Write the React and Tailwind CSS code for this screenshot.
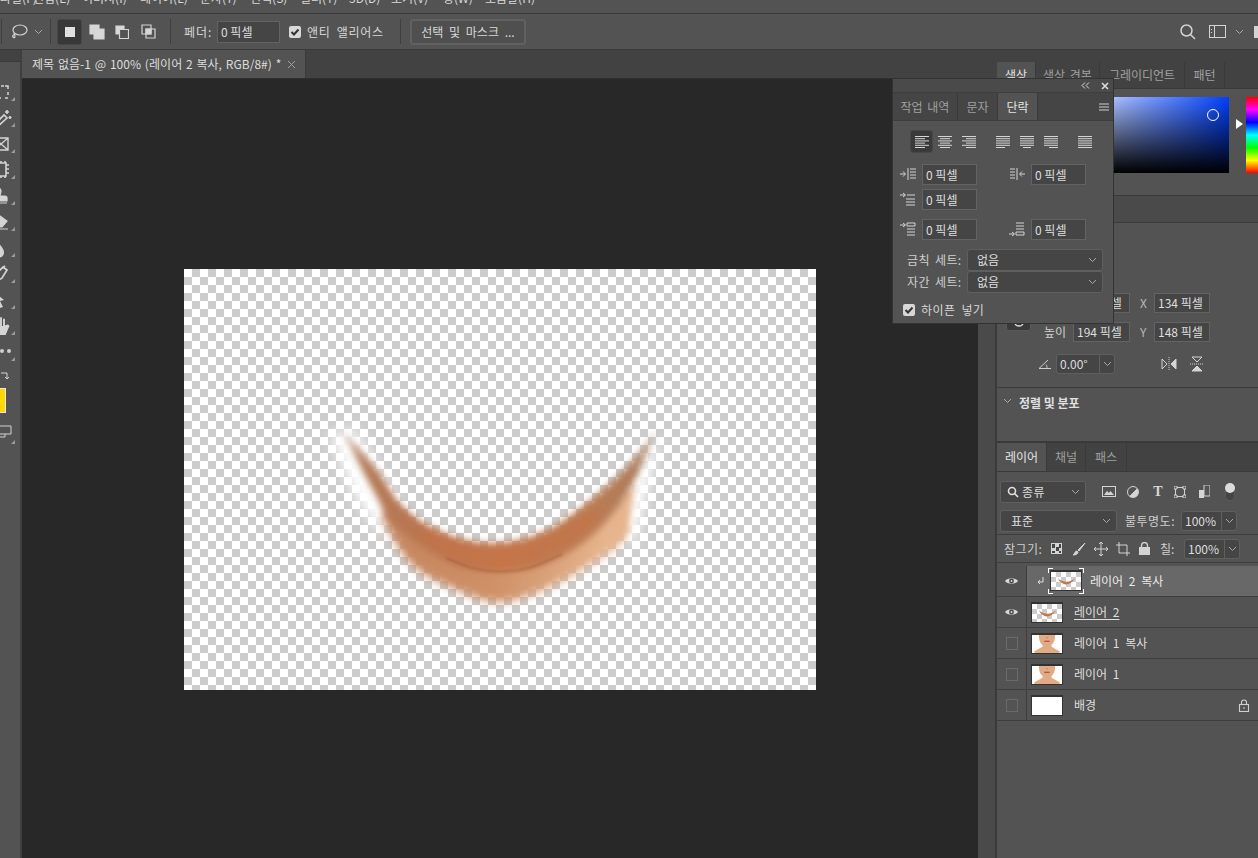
const font = "font-['Noto_Sans_CJK_KR','Liberation_Sans',sans-serif]";

const Ico = ({ w = 16, h = 16, children, className = "" }) => (
  <svg width={w} height={h} viewBox={`0 0 ${w} ${h}`} className={`block shrink-0 ${className}`} fill="none" stroke="#d4d4d4" strokeWidth="1.2">
    {children}
  </svg>
);

const Chevron = ({ className = "" }) => (
  <svg width="9" height="6" viewBox="0 0 9 6" className={`block shrink-0 ${className}`} fill="none" stroke="#a8a8a8" strokeWidth="1">
    <path d="M1 1l3.5 3.5L8 1" />
  </svg>
);

const Field = ({ children, w = "w-[55px]", h = "h-[21px]" }) => (
  <div className={`${w} ${h} shrink-0 bg-[#454545] border border-[#636363] text-[#dedede] text-[12px] pl-[3px] flex items-center leading-none whitespace-nowrap overflow-hidden`}>{children}</div>
);

const Select = ({ w, h = "h-[22px]", children, className = "" }) => (
  <div className={`${w} ${h} shrink-0 bg-[#454545] border border-[#5f5f5f] rounded-[3px] flex items-center justify-between pr-[5px] text-[#dedede] text-[12px] leading-none ${className}`}>
    {children}
    <Chevron />
  </div>
);

const Spin = ({ value, w = "w-[56px]" }) => (
  <div className={`${w} h-[20px] shrink-0 bg-[#454545] border border-[#5f5f5f] rounded-[3px] flex items-center text-[#dedede] text-[12px] leading-none`}>
    <span className="flex-1 pl-[3px]">{value}</span>
    <span className="w-[15px] h-full border-l border-[#5f5f5f] flex items-center justify-center"><Chevron /></span>
  </div>
);

const Check = () => (
  <span className="w-[12px] h-[12px] rounded-[2px] bg-[#d8d8d8] flex items-center justify-center shrink-0">
    <svg width="10" height="10" viewBox="0 0 10 10" fill="none" stroke="#333" strokeWidth="2"><path d="M1.5 5l2.5 2.5 4.5-5" /></svg>
  </span>
);

const Sep = () => <div className="w-px h-[25px] bg-[#3f3f3f] shrink-0" />;

const TabItem = ({ label, active, w }) => (
  <div className={`${w} h-full shrink-0 flex items-center justify-center text-[12px] [word-spacing:2px] whitespace-nowrap border-r border-[#3a3a3a] ${active ? "bg-[#535353] text-[#e4e4e4]" : "text-[#a0a0a0]"}`}>{label}</div>
);

const AlignIcon = ({ mode }) => {
  const rows = [0, 1, 2, 3, 4, 5];
  const span = (i) => {
    const short = i % 2 === 1;
    if (mode === "left") return short ? [0, 10] : [0, 14];
    if (mode === "center") return short ? [2, 12] : [0, 14];
    if (mode === "right") return short ? [4, 14] : [0, 14];
    if (mode === "jl") return i === 5 ? [0, 9] : [0, 14];
    if (mode === "jc") return i === 5 ? [3, 11] : [0, 14];
    if (mode === "jr") return i === 5 ? [5, 14] : [0, 14];
    return [0, 14];
  };
  return (
    <Ico w={14} h={14}>
      {rows.map((i) => {
        const [a, b] = span(i);
        return <path key={i} d={`M${a} ${1.5 + i * 2.2}H${b}`} strokeWidth="1" />;
      })}
    </Ico>
  );
};

const IndentIcon = ({ kind }) => (
  <Ico w={17} h={17}>
    {kind === "right" ? (
      <>
        <path d="M1 3h5M1 6h5M1 9h5M1 12h5M8 2v12" strokeWidth="1" />
        <path d="M16 8h-5M13 5.5L10.5 8l2.5 2.5" strokeWidth="1" />
      </>
    ) : kind === "before" ? (
      <>
        <path d="M0 4h5M3 2l2.5 2L3 6" strokeWidth="1" />
        <path d="M7 2h8v3H7zM7 8h8M7 11h8M7 14h8" strokeWidth="1" />
      </>
    ) : kind === "after" ? (
      <>
        <path d="M0 13h5M3 11l2.5 2L3 15" strokeWidth="1" />
        <path d="M7 2h8M7 5h8M7 8h8M7 11h8v3H7z" strokeWidth="1" />
      </>
    ) : kind === "first" ? (
      <>
        <path d="M0 4h5M3 2l2.5 2L3 6" strokeWidth="1" />
        <path d="M7 4h8M6 8h9M6 11h9M6 14h9" strokeWidth="1" />
      </>
    ) : (
      <>
        <path d="M0 8h5M3 5.5L5.5 8 3 10.5" strokeWidth="1" />
        <path d="M8 2v12M10 3h6M10 6h6M10 9h6M10 12h6" strokeWidth="1" />
      </>
    )}
  </Ico>
);

const spline = (pts) => {
  let d = "";
  for (let i = 0; i < pts.length - 1; i++) {
    const p0 = pts[i - 1] || pts[i];
    const p1 = pts[i];
    const p2 = pts[i + 1];
    const p3 = pts[i + 2] || p2;
    const c1 = [p1[0] + (p2[0] - p0[0]) / 6, p1[1] + (p2[1] - p0[1]) / 6];
    const c2 = [p2[0] - (p3[0] - p1[0]) / 6, p2[1] - (p3[1] - p1[1]) / 6];
    d += `C${c1[0]} ${c1[1]} ${c2[0]} ${c2[1]} ${p2[0]} ${p2[1]}`;
  }
  return d;
};

const shape = (a, b) => {
  const start = `M${a[0][0]} ${a[0][1]}`;
  const back = [a[a.length - 1], ...b];
  return `${start}${spline(a)}${spline(back)}Z`;
};

const upper = [[158, 161], [193, 201], [219, 238], [259, 264], [309, 274], [359, 263], [403, 234], [443, 198], [473, 161]];
const lowerBack = [[449, 214], [426, 248], [393, 278], [353, 298], [313, 303], [276, 298], [243, 281], [209, 254], [189, 221], [158, 161]];
const fade = [[198, 248], [226, 294], [266, 318], [313, 333], [359, 321], [409, 294], [439, 271], [444, 244], [449, 216]];
const fadeBack = [[426, 238], [393, 264], [353, 282], [313, 288], [276, 284], [243, 268], [209, 238], [198, 248]];
const crease = [[262, 289], [285, 298], [313, 302.5], [345, 299], [378, 285]];

const Chin = () => (
  <svg viewBox="0 0 632 421" className="block w-full h-full">
    <defs>
      <filter id="b8" x="-30%" y="-30%" width="160%" height="160%"><feGaussianBlur stdDeviation="7" /></filter>
      <filter id="b5" x="-30%" y="-30%" width="160%" height="160%"><feGaussianBlur stdDeviation="5" /></filter>
      <filter id="b3" x="-30%" y="-30%" width="160%" height="160%"><feGaussianBlur stdDeviation="3.5" /></filter>
      <filter id="b1" x="-30%" y="-30%" width="160%" height="160%"><feGaussianBlur stdDeviation="1" /></filter>
      <linearGradient id="band" x1="0" x2="1" y1="0" y2="0">
        <stop offset="0" stopColor="#a98068" stopOpacity="0.55" />
        <stop offset="0.06" stopColor="#b07a58" />
        <stop offset="0.25" stopColor="#bb7550" />
        <stop offset="0.5" stopColor="#c4774c" />
        <stop offset="0.8" stopColor="#bc7a52" />
        <stop offset="0.94" stopColor="#ac7d5c" />
        <stop offset="1" stopColor="#a98a70" stopOpacity="0.55" />
      </linearGradient>
      <linearGradient id="low" x1="0" x2="1" y1="0" y2="0">
        <stop offset="0" stopColor="#c4845c" />
        <stop offset="0.45" stopColor="#cf9168" />
        <stop offset="1" stopColor="#ebbd96" />
      </linearGradient>
    </defs>
    <path d="M146 165L170 225L198 266L214 232L170 160Z" fill="#fff" filter="url(#b8)" />
    <path d="M476 168L462 225L450 278L430 250L455 190Z" fill="#fff" filter="url(#b8)" />
    <path d={shape(fade, fadeBack)} fill="url(#low)" filter="url(#b5)" />
    <path d="M441 268C445 250 446 232 449 216L432 244L420 276Z" fill="#e6b48e" filter="url(#b3)" />
    <path d={shape(upper, lowerBack)} fill="url(#band)" filter="url(#b3)" />
    <path d={`M262 289${spline(crease)}`} fill="none" stroke="#7b4228" strokeWidth="1.6" strokeOpacity="0.4" filter="url(#b1)" />
    <path d="M240 262C262 280 288 288 313 290C350 288 385 268 410 246" fill="none" stroke="#c8703f" strokeWidth="12" strokeOpacity="0.5" filter="url(#b5)" />
  </svg>
);

const MiniChin = () => (
  <svg viewBox="0 0 32 20" className="block w-full h-full">
    <path d="M7 7C11 16 21 16 26 7C21 12 12 12 7 7Z" fill="#c17a50" />
  </svg>
);

const checker = "bg-[repeating-conic-gradient(#ccc_0_25%,#fff_0_50%)]";

const Thumb = ({ kind }) => (
  <div className="w-[32px] h-[21px] shrink-0 border-t-2 border-b border-x border-[#333] bg-white overflow-hidden">
    {kind === "chin" && (
      <div className={`w-full h-full ${checker} bg-[length:10px_10px]`}><MiniChin /></div>
    )}
    {kind === "face" && (
      <svg viewBox="0 0 32 20" className="block w-full h-full">
        <path d="M7 0h18c0 5-1 9-4 11v2l9 5v2H2v-2l9-5v-2C8 9 7 5 7 0Z" fill="#e3ab85" />
        <path d="M13 7h6" stroke="#a8544c" strokeWidth="1.4" />
        <path d="M15 3h2" stroke="#b9825f" strokeWidth="1" />
      </svg>
    )}
  </div>
);

const Eye = () => (
  <svg width="15" height="10" viewBox="0 0 14 10" className="block">
    <path d="M0.5 5C3 1.3 11 1.3 13.5 5C11 8.7 3 8.7 0.5 5Z" fill="#d8d8d8" />
    <circle cx="7" cy="5" r="2.4" fill="#444" />
    <circle cx="7" cy="5" r="1" fill="#d8d8d8" />
  </svg>
);

const LayerRow = ({ name, visible, thumb, underline, lock }) => (
  <div className="h-[31px] flex items-center border-b border-[#3e3e3e]">
    <div className="w-[30px] h-full shrink-0 flex items-center justify-center border-r border-[#3e3e3e]">
      {visible ? <Eye /> : <span className="w-[12px] h-[13px] border border-[#6a6a6a]" />}
    </div>
    <div className="ml-[4px]"><Thumb kind={thumb} /></div>
    <span className={`ml-[11px] text-[12px] text-[#dedede] [word-spacing:3px] ${underline ? "underline underline-offset-2" : ""}`}>{name}</span>
    {lock && (
      <svg width="12" height="13" viewBox="0 0 12 13" className="ml-auto mr-[8px]" fill="none" stroke="#cfcfcf" strokeWidth="1.1">
        <rect x="1.5" y="5.5" width="9" height="7" /><path d="M3.5 5.5V3.5a2.5 2.5 0 0 1 5 0v2" /><rect x="5.3" y="8.3" width="1.4" height="1.4" fill="#cfcfcf" stroke="none" />
      </svg>
    )}
  </div>
);

const toolIcons = [
  <path d="M-1 4h3M5 4h3M9 4h3v3M12 10v3M12 16H9M5 16H2" strokeWidth="1.5" />,
  <path d="M-2 17L8 7l3 3L1 19ZM11 2v4M9 4h4M14 8v3M12.500 9.500h3" strokeWidth="1.6" />,
  <path d="M-2 4h14v12H-2zM-2 4l14 12M12 4L-2 16" strokeWidth="1.4" />,
  <path d="M-1 3h11v13H-1zM10 5h3M10 9h3M10 13h3M1 1v2M5 1v2M9 1v2M1 16v2M5 16v2M9 16v2" strokeWidth="1.6" />,
  <path d="M2 2a3 3 0 0 1 3 3c0 2-1 3-1 5h5c1 0 2 1 2 2v3H-4v-3h4c0-2-1-3-1-5a3 3 0 0 1 3-5ZM-4 17h15" fill="#d4d4d4" strokeWidth="1.2" />,
  <path d="M-3 11l7-7 7 5-5 6H1ZM-3 17h15" fill="#d4d4d4" strokeWidth="1.2" />,
  <path d="M0 2c3 4 8 8 8 12a5 5 0 0 1-10 1c0-4 1-9 2-13Z" fill="#d4d4d4" strokeWidth="0" />,
  <path d="M-3 11c2 5 7 5 9 3l5-8-4-3-5 5M-3 11c2-2 5-2 6 0M5 5l4-3" strokeWidth="1.7" />,
  <g><path d="M-4 0L8 10l-4 1 3 6-3 1-3-6-3 3Z" fill="#d4d4d4" strokeWidth="0" /><path d="M-5 -1L4 7l-3 1-1 3Z" fill="#0c0c0c" strokeWidth="0" /></g>,
  <path d="M-1 11V5M2 10V2.500M5 10V2M8 10V3.500M10.500 10c1-1 2.500-.5 1.500 1l-3 7H0c-2-1-2-4-2-7h7Z" fill="#d4d4d4" strokeWidth="1.9" strokeLinecap="round" />,
];

const Corner = ({ b = "bottom-[3px]" }) => (
  <span className={`absolute left-[15px] ${b} w-0 h-0 border-l-[4px] border-l-transparent border-b-[4px] border-b-[#9a9a9a]`} />
);

const Tools = () => (
  <div className="w-[20px] shrink-0 flex flex-col">
    <div className="h-[12px] shrink-0 border-b border-[#3a3a3a]" />
    <div className="flex-1 bg-[#535353] overflow-hidden">
      <div className="flex flex-col pt-[16px] -ml-[4px]">
        {toolIcons.map((ic, i) => (
          <div key={i} className="h-[26px] flex items-center relative">
            <Ico w={18} h={18} className="overflow-visible">{ic}</Ico>
            <Corner />
          </div>
        ))}
        <div className="h-[26px] flex items-center relative">
          <span className="flex gap-[3px] ml-[4px]"><i className="w-[4px] h-[4px] rounded-full bg-[#cfcfcf]" /><i className="w-[4px] h-[4px] rounded-full bg-[#cfcfcf]" /></span>
          <Corner />
        </div>
        <div className="h-[18px] flex items-end">
          <svg width="12" height="11" viewBox="0 0 12 11" className="ml-[4px]" fill="none" stroke="#d4d4d4"><path d="M1 2h6v6M5 6l2 2 2-2" /></svg>
        </div>
        <div className="mt-[6px] w-[10px] h-[25px] bg-[#ffd800] border border-[#e8e8e8]" />
        <div className="h-[34px] flex items-center relative mt-[2px]">
          <svg width="16" height="14" viewBox="0 0 16 14" fill="none" stroke="#d4d4d4"><path d="M3 1h12v8H3zM1 4h2M1 4v8h8V9" /></svg>
          <Corner b="bottom-[5px]" />
        </div>
      </div>
    </div>
  </div>
);

const OptionsBar = () => (
  <div className="h-[36px] shrink-0 flex items-center bg-[#535353] border-b border-[#3a3a3a] pl-[1px] text-[12px] text-[#d8d8d8]">
    <Sep />
    <svg width="17" height="17" viewBox="0 0 17 17" className="ml-[9px]" fill="none" stroke="#d4d4d4" strokeWidth="1.2">
      <ellipse cx="9" cy="7" rx="7" ry="5" /><path d="M4 11c-2 1-3 2-2 3s2 1 2-1l-1-3" />
    </svg>
    <Chevron className="ml-[6px]" />
    <div className="ml-[7px]"><Sep /></div>
    <div className="ml-[6px] w-[25px] h-[26px] rounded-[3px] bg-[#383838] border border-[#474747] flex items-center justify-center">
      <span className="w-[10px] h-[10px] bg-[#e0e0e0]" />
    </div>
    <div className="ml-[7px]">
      <Ico w={16} h={16}><path d="M1 1h9v9H1z" fill="#d8d8d8" /><path d="M5 5h10v10H5z" fill="#d8d8d8" /></Ico>
    </div>
    <div className="ml-[10px]">
      <Ico w={14} h={14}><path d="M1 1h8v8H1z" fill="#d8d8d8" /><path d="M4.500 4.500h9v9h-9z" fill="#535353" /></Ico>
    </div>
    <div className="ml-[12px]">
      <Ico w={15} h={15}><path d="M1 1h9v9H1zM5 5h9v9H5z" /><path d="M5 5h5v5H5z" fill="#d8d8d8" /></Ico>
    </div>
    <div className="ml-[14px]"><Sep /></div>
    <span className="ml-[13px] w-[27px] whitespace-nowrap tracking-[1px]">페더:</span>
    <div className="ml-[6px]"><Field w="w-[63px]" h="h-[22px]">0 픽셀</Field></div>
    <div className="ml-[9px]"><Check /></div>
    <span className="ml-[6px] whitespace-nowrap w-[80px] tracking-[0.7px] [word-spacing:3px]">앤티 앨리어스</span>
    <div className="ml-[13px]"><Sep /></div>
    <div className="ml-[9px] w-[116px] h-[26px] rounded-[3px] border-2 border-[#616161] bg-[#4f4f4f] flex items-center justify-center whitespace-nowrap [word-spacing:3px]">선택 및 마스크 ...</div>
    <svg width="16" height="16" viewBox="0 0 16 16" className="ml-auto" fill="none" stroke="#d4d4d4" strokeWidth="1.5"><circle cx="6.5" cy="6.5" r="5.5" /><path d="M10.5 10.5L15 15" /></svg>
    <svg width="17" height="13" viewBox="0 0 17 13" className="ml-[13px]" fill="none" stroke="#d4d4d4" strokeWidth="1"><rect x="0.5" y="0.5" width="16" height="12" /><path d="M5.5 0.5v12M2.500 4v1M2.500 7v1" /></svg>
    <Chevron className="ml-[9px]" />
    <span className="ml-[10px] w-[4px] h-[12px] bg-[#d4d4d4]" />
  </div>
);

const MenuBar = () => (
  <div className="h-[14px] shrink-0 overflow-hidden bg-[#535353] border-b border-[#3a3a3a]">
    <div className="flex text-[12px] leading-none text-[#d8d8d8] -mt-[8px] whitespace-nowrap">
      <span className="w-[33px]">파일(F)</span>
      <span className="w-[49px]">편집(E)</span>
      <span className="w-[58px]">이미지(I)</span>
      <span className="w-[60px]">레이어(L)</span>
      <span className="w-[50px]">문자(Y)</span>
      <span className="w-[50px]">선택(S)</span>
      <span className="w-[49px]">필터(T)</span>
      <span className="w-[42px]">3D(D)</span>
      <span className="w-[52px]">보기(V)</span>
      <span className="w-[42px]">창(W)</span>
      <span>도움말(H)</span>
    </div>
  </div>
);

const ColorPanel = () => (
  <div className="h-[134px] shrink-0 border-b border-[#3a3a3a] flex flex-col">
    <div className="h-[27px] shrink-0 flex bg-[#424242] border-b border-[#3a3a3a]">
      <TabItem label="색상" active w="w-[39px]" />
      <TabItem label="색상 견본" w="w-[64px]" />
      <TabItem label="그레이디언트" w="w-[85px]" />
      <TabItem label="패턴" w="w-[40px]" />
    </div>
    <div className="flex pt-[8px] pl-[59px]">
      <div className="w-[173px] h-[76px] relative bg-[linear-gradient(to_bottom,transparent,#000),linear-gradient(to_right,#fff,#0040ff)]">
        <span className="absolute left-[151px] top-[12px] w-[12px] h-[12px] rounded-full border border-white" />
      </div>
      <span className="ml-[7px] mt-[22px] w-0 h-0 border-l-[7px] border-l-white border-y-[5px] border-y-transparent" />
      <div className="ml-[3px] w-[12px] h-[76px] bg-[linear-gradient(to_bottom,#f00,#f0f,#00f,#0ff,#0f0,#ff0,#f00)]" />
    </div>
  </div>
);

const SizeRow = ({ label, value, axis, xval }) => (
  <div className="flex items-center">
    <div className="ml-[13px] w-[20px] text-[#cfcfcf] whitespace-nowrap">{label}</div>
    <div className="ml-[9px]"><Field w="w-[57px]" h="h-[20px]">{value}</Field></div>
    <span className="ml-[10px] w-[14px] text-[#b8b8b8]">{axis}</span>
    <Field w="w-[56px]" h="h-[20px]">{xval}</Field>
  </div>
);

const Properties = () => (
  <div className="flex-1 flex flex-col text-[12px] text-[#d8d8d8]">
    <div className="h-[27px] shrink-0 bg-[#4a4a4a] border-b border-[#3a3a3a]" />
    <div className="h-[165px] shrink-0 border-b border-[#3a3a3a] flex flex-col">
      <div className="mt-[70px] flex">
        <span className="ml-[9px] w-[25px] h-[38px] rounded-b-[3px] bg-[#3a3a3a] border border-[#5a5a5a] flex items-end justify-center pb-[3px]">
          <svg width="10" height="5" viewBox="0 0 10 5" fill="none" stroke="#dcdcdc" strokeWidth="1.400"><path d="M1 0v1a4 3 0 0 0 8 0V0" /></svg>
        </span>
        <div className="flex flex-col gap-[9px]">
          <SizeRow label="폭" value="194 픽셀" axis="X" xval="134 픽셀" />
          <SizeRow label="높이" value="194 픽셀" axis="Y" xval="148 픽셀" />
        </div>
      </div>
      <div className="mt-[12px] flex items-center">
        <svg width="14" height="10" viewBox="0 0 14 10" className="ml-[41px]" fill="none" stroke="#cfcfcf"><path d="M13 9.5H1L10 1M8 5.5c1 1 1 2.500 1 4" /></svg>
        <div className="ml-[4px]"><Spin value="0.00°" w="w-[59px]" /></div>
        <svg width="16" height="14" viewBox="0 0 16 14" className="ml-[46px]" stroke="#d4d4d4"><path d="M1 2l5 5-5 5z" fill="none" /><path d="M15 2l-5 5 5 5z" fill="#d4d4d4" /><path d="M8 0v14" strokeDasharray="1 1" /></svg>
        <svg width="14" height="16" viewBox="0 0 14 16" className="ml-[13px]" stroke="#d4d4d4"><path d="M2 1l5 5 5-5z" fill="none" /><path d="M2 15l5-5 5 5z" fill="#d4d4d4" /><path d="M0 8h14" strokeDasharray="1 1" /></svg>
      </div>
    </div>
    <div className="h-[55px] shrink-0 border-b-2 border-[#3a3a3a] flex items-start pt-[6px]">
      <Chevron className="ml-[6px] mt-[4px]" />
      <span className="ml-[7px] font-bold text-[#e0e0e0] leading-[17px]">정렬 및 분포</span>
    </div>
    <div className="h-[29px] shrink-0 flex bg-[#424242] border-b border-[#3a3a3a]">
      <TabItem label="레이어" active w="w-[50px]" />
      <TabItem label="채널" w="w-[39px]" />
      <TabItem label="패스" w="w-[41px]" />
    </div>
    <div className="h-[35px] shrink-0 flex items-center pl-[3px] pt-[4px]">
      <Select w="w-[86px]" className="pl-[6px]">
        <span className="flex items-center gap-[3px] tracking-[0.5px]">
          <svg width="12" height="12" viewBox="0 0 12 12" fill="none" stroke="#e0e0e0" strokeWidth="1.6"><circle cx="5" cy="5" r="3.500" /><path d="M7.500 7.500L11 11" /></svg>
          종류
        </span>
      </Select>
      <svg width="14" height="12" viewBox="0 0 14 12" className="ml-[16px]" fill="none" stroke="#d4d4d4"><rect x="0.5" y="0.5" width="13" height="10" /><path d="M2 9l3-4 2 2 1.500-2L12 9z" fill="#d4d4d4" stroke="none" /></svg>
      <span className="ml-[11px] w-[12px] h-[12px] rounded-full border border-[#d4d4d4] bg-[linear-gradient(135deg,transparent_50%,#d4d4d4_50%)]" />
      <span className="ml-[12px] w-[14px] text-center font-bold font-['Liberation_Serif',serif] text-[14px] leading-none">T</span>
      <svg width="12" height="12" viewBox="0 0 12 12" className="ml-[9px]" fill="none" stroke="#d4d4d4"><path d="M1.500 1.500h9v9h-9z" /><path d="M0 0h3v3H0zM9 0h3v3H9zM0 9h3v3H0zM9 9h3v3H9z" fill="#535353" /></svg>
      <svg width="11" height="13" viewBox="0 0 11 13" className="ml-[13px]"><path d="M0 5h5v8H0z" fill="#d4d4d4" /><path d="M5 0h6v11H5V5z" fill="none" stroke="#d4d4d4" /></svg>
      <span className="ml-[15px] w-[10px] h-[18px] rounded-full bg-[#444] border border-[#5a5a5a] relative">
        <span className="absolute -left-px -top-px w-[10px] h-[10px] rounded-full bg-[#dcdcdc]" />
      </span>
    </div>
    <div className="h-[28px] shrink-0 flex items-center pl-[3px] border-b border-[#3e3e3e]">
      <Select w="w-[117px]" className="pl-[10px]">표준</Select>
      <span className="ml-[8px] w-[56px] whitespace-nowrap text-[#cfcfcf] tracking-[0.5px]">불투명도:</span>
      <Spin value="100%" />
    </div>
    <div className="h-[28px] shrink-0 flex items-center pl-[7px] border-b border-[#3e3e3e]">
      <span className="w-[47px] whitespace-nowrap text-[#cfcfcf] tracking-[0.5px]">잠그기:</span>
      <span className="w-[11px] h-[11px] bg-[repeating-conic-gradient(#d4d4d4_0_25%,#444_0_50%)] bg-[length:7px_7px] border border-[#d4d4d4]" />
      <svg width="14" height="14" viewBox="0 0 14 14" className="ml-[10px]"><path d="M13 1L6 8l1 1 6-8zM5 9c-2 0-2 2-3 3l-1 1c3 0 5-1 5-3z" fill="#d4d4d4" stroke="#d4d4d4" /></svg>
      <svg width="14" height="14" viewBox="0 0 14 14" className="ml-[8px]" fill="none" stroke="#d4d4d4"><path d="M7 0v14M0 7h14M5 2l2-2 2 2M5 12l2 2 2-2M2 5L0 7l2 2M12 5l2 2-2 2" /></svg>
      <svg width="14" height="14" viewBox="0 0 14 14" className="ml-[8px]" fill="none" stroke="#d4d4d4"><path d="M3 3h8v8H3zM0 3h3M11 11h3M3 0v3M11 11v3" /></svg>
      <svg width="11" height="13" viewBox="0 0 11 13" className="ml-[9px]"><rect x="0" y="5" width="11" height="8" fill="#d4d4d4" /><path d="M2.500 5V3.500a3 3 0 0 1 6 0V5" fill="none" stroke="#d4d4d4" strokeWidth="1.400" /></svg>
      <span className="ml-[10px] w-[24px] text-[#cfcfcf]">칠:</span>
      <Spin value="100%" />
    </div>
    <div className="h-[31px] mt-[3px] flex items-center border-b border-[#3e3e3e]">
      <div className="w-[30px] h-full flex items-center justify-center border-r border-[#3e3e3e]"><Eye /></div>
      <div className="flex-1 h-full bg-[#686868] flex items-center pl-[8px]">
        <svg width="10" height="11" viewBox="0 0 10 11" fill="none" stroke="#dedede"><path d="M8 1v5H3M5 4L3 6l2 2" /></svg>
        <div className="ml-[3px] w-[36px] h-[26px] p-[2px] relative">
          <Thumb kind="chin" />
          <span className="absolute left-0 top-0 w-[5px] h-[5px] border-l border-t border-white" />
          <span className="absolute right-0 top-0 w-[5px] h-[5px] border-r border-t border-white" />
          <span className="absolute left-0 bottom-0 w-[5px] h-[5px] border-l border-b border-white" />
          <span className="absolute right-0 bottom-0 w-[5px] h-[5px] border-r border-b border-white" />
        </div>
        <span className="ml-[6px] text-[12px] text-[#eaeaea] [word-spacing:3px]">레이어 2 복사</span>
      </div>
    </div>
    <LayerRow name="레이어 2" visible thumb="chin" underline />
    <LayerRow name="레이어 1 복사" thumb="face" />
    <LayerRow name="레이어 1" thumb="face" />
    <LayerRow name="배경" thumb="white" lock />
    <div className="flex-1" />
  </div>
);

const FloatingPanel = () => (
  <div className="absolute left-[892px] top-[78px] w-[222px] h-[246px] bg-[#535353] border border-[#333] text-[12px] text-[#d8d8d8] flex flex-col z-10">
    <div className="h-[14px] shrink-0 bg-[#4a4a4a] border-b border-[#3e3e3e] flex items-center justify-end pr-[4px] gap-[11px]">
      <svg width="9" height="7" viewBox="0 0 9 7" fill="none" stroke="#dcdcdc"><path d="M4 0.500L1 3.500l3 3M8 0.500L5 3.500l3 3" /></svg>
      <svg width="8" height="8" viewBox="0 0 8 8" fill="none" stroke="#dcdcdc" strokeWidth="1.600"><path d="M1 1l6 6M7 1L1 7" /></svg>
    </div>
    <div className="h-[28px] shrink-0 flex items-stretch bg-[#454545] border-b border-[#3e3e3e]">
      <TabItem label="작업 내역" w="w-[65px]" />
      <TabItem label="문자" w="w-[40px]" />
      <TabItem label="단락" active w="w-[40px]" />
      <svg width="10" height="8" viewBox="0 0 10 8" className="ml-auto mr-[4px] self-center" stroke="#cfcfcf"><path d="M0 1h10M0 4h10M0 7h10" /></svg>
    </div>
    <div className="flex items-center mt-[9px] pl-[17px]">
      <span className="w-[23px] h-[23px] rounded-[3px] bg-[#3a3a3a] border border-[#484848] flex items-center justify-center"><AlignIcon mode="left" /></span>
      <span className="w-[24px] flex justify-center"><AlignIcon mode="center" /></span>
      <span className="w-[24px] flex justify-center"><AlignIcon mode="right" /></span>
      <span className="ml-[10px] w-[24px] flex justify-center"><AlignIcon mode="jl" /></span>
      <span className="w-[24px] flex justify-center"><AlignIcon mode="jc" /></span>
      <span className="w-[24px] flex justify-center"><AlignIcon mode="jr" /></span>
      <span className="ml-[10px] w-[24px] flex justify-center"><AlignIcon mode="all" /></span>
    </div>
    <div className="flex items-center mt-[11px] pl-[7px]">
      <IndentIcon kind="left" />
      <div className="ml-[5px]"><Field>0 픽셀</Field></div>
      <div className="ml-[32px]"><IndentIcon kind="right" /></div>
      <div className="ml-[5px]"><Field>0 픽셀</Field></div>
    </div>
    <div className="flex items-center mt-[4px] pl-[7px]">
      <IndentIcon kind="first" />
      <div className="ml-[5px]"><Field>0 픽셀</Field></div>
    </div>
    <div className="flex items-center mt-[9px] pl-[7px]">
      <IndentIcon kind="before" />
      <div className="ml-[5px]"><Field>0 픽셀</Field></div>
      <div className="ml-[32px]"><IndentIcon kind="after" /></div>
      <div className="ml-[5px]"><Field>0 픽셀</Field></div>
    </div>
    <div className="flex items-center mt-[9px] pl-[14px]">
      <span className="w-[60px] whitespace-nowrap text-[#cfcfcf] tracking-[0.4px] [word-spacing:2px]">금칙 세트:</span>
      <Select w="w-[136px]" className="pl-[9px]">없음</Select>
    </div>
    <div className="flex items-center pl-[14px]">
      <span className="w-[60px] whitespace-nowrap text-[#cfcfcf] tracking-[0.4px] [word-spacing:2px]">자간 세트:</span>
      <Select w="w-[136px]" className="pl-[9px]">없음</Select>
    </div>
    <div className="flex items-center mt-[8px] pl-[10px]">
      <Check />
      <span className="ml-[6px] tracking-[0.4px] [word-spacing:3px]">하이픈 넣기</span>
    </div>
  </div>
);

export default function App() {
  return (
    <div className={`relative w-[1258px] h-[858px] overflow-hidden bg-[#535353] flex flex-col ${font}`}>
      <MenuBar />
      <OptionsBar />
      <div className="flex-1 flex min-h-0 bg-[#424242]">
        <Tools />
        <div className="w-[2px] shrink-0 bg-[#3f3f3f]" />
        <div className="w-[975px] shrink-0 flex flex-col">
          <div className="h-[29px] shrink-0 flex bg-[#424242] border-b border-[#2f2f2f]">
            <div className="w-[284px] h-full bg-[#535353] border-r border-[#3a3a3a] flex items-center pl-[10px] text-[12px] text-[#dcdcdc] whitespace-nowrap">
              <span className="[word-spacing:1px] tracking-[0.05px]">제목 없음-1 @ 100% (레이어 2 복사, RGB/8#) *</span>
              <svg width="7" height="7" viewBox="0 0 7 7" className="ml-[7px]" stroke="#a0a0a0"><path d="M0 0l7 7M7 0L0 7" /></svg>
            </div>
          </div>
          <div className="flex-1 flex min-h-0">
            <div className="w-[956px] shrink-0 bg-[#282828] flex justify-center pt-[190px]">
              <div className={`w-[632px] h-[421px] ${checker} bg-[length:16px_16px]`}>
                <Chin />
              </div>
            </div>
            <div className="flex-1 bg-[#4a4a4a] border-r-2 border-[#3a3a3a]" />
          </div>
        </div>
        <div className="flex-1 mt-[12px] flex flex-col bg-[#535353]">
          <ColorPanel />
          <Properties />
        </div>
      </div>
      <FloatingPanel />
    </div>
  );
}
